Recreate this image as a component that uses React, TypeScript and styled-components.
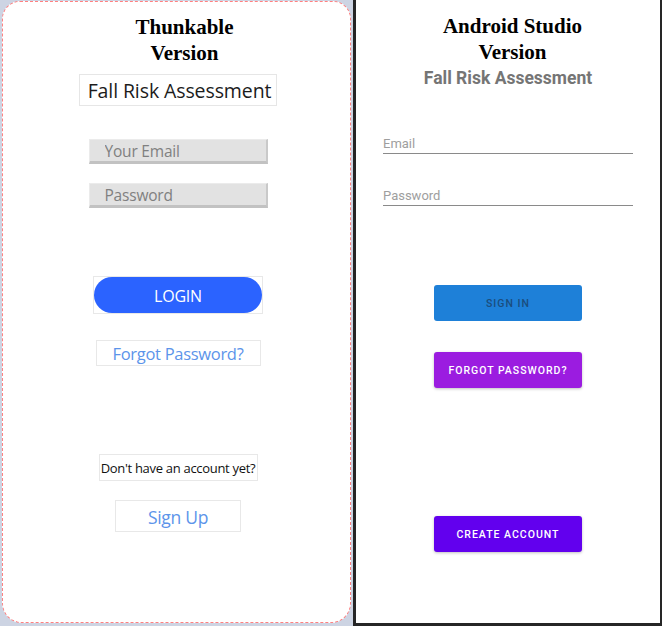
import React from "react";
import styled, { createGlobalStyle } from "styled-components";

const Global = createGlobalStyle`
  html, body { margin: 0; padding: 0; background: #ffffff; }
  #root { width: 662px; height: 626px; }
  * { box-sizing: border-box; }
`;

const Page = styled.div`
  display: flex;
  width: 662px;
  height: 626px;
  overflow: hidden;
`;

const LeftBackdrop = styled.div`
  width: 353px;
  height: 626px;
  background: #cdd4e3;
  padding: 1px 2px 3px 2px;
  display: flex;
`;

const PhoneCard = styled.div`
  flex: 1;
  background: #ffffff;
  border: 1px dashed #ff8080;
  border-radius: 18px 18px 20px 20px;
  display: flex;
  flex-direction: column;
  align-items: center;
  padding: 12px 0 0 3px;
`;

const RightPanel = styled.div`
  width: 309px;
  height: 626px;
  background: #ffffff;
  border-left: 3px solid #262626;
  border-right: 2px solid #262626;
  border-bottom: 3px solid #262626;
  display: flex;
  flex-direction: column;
  align-items: center;
  padding-top: 13px;
`;

const Title = styled.h1<{ $shift: number }>`
  margin: 0 0 0 ${(p) => p.$shift}px;
  font-family: "Liberation Serif", "Times New Roman", serif;
  font-weight: 700;
  font-size: 21px;
  line-height: 26px;
  color: #000000;
  text-align: center;
`;

/* ---------- Thunkable parts ---------- */

const Label = styled.div`
  margin-top: 8px;
  height: 32px;
  padding: 0 5px 0 8px;
  border: 1px solid #e6e6e6;
  display: flex;
  align-items: center;
  font-family: "Open Sans", "Noto Sans", sans-serif;
  font-size: 19.5px;
  letter-spacing: -0.1px;
  color: #1c1c1c;
`;

const TkInput = styled.input<{ $top: number }>`
  display: block;
  margin-top: ${(p) => p.$top}px;
  width: 179px;
  height: 25px;
  padding: 1px 0 0 15px;
  background: #e2e2e2;
  border-style: solid;
  border-width: 1px 2px 3px 1px;
  border-color: #ebebeb #c9c9c9 #c2c2c2 #ebebeb;
  outline: none;
  font-family: "Open Sans", "Noto Sans", sans-serif;
  font-size: 15.5px;
  letter-spacing: -0.2px;
  color: #808080;
  &::placeholder { color: #808080; opacity: 1; }
`;

const PillFrame = styled.div`
  margin-top: 68px;
  border: 1px solid #e8e8e8;
  width: 170px;
  height: 38px;
  display: flex;
`;

const PillButton = styled.button`
  flex: 1;
  border: none;
  border-radius: 19px;
  background: #2b63ff;
  color: #ffffff;
  font-family: "Open Sans", "Noto Sans", sans-serif;
  font-size: 16px;
  letter-spacing: -0.2px;
  padding: 1px 0 0 0;
`;

const LinkBox = styled.button<{ $top: number; $w: number; $h: number; $size: number }>`
  margin-top: ${(p) => p.$top}px;
  width: ${(p) => p.$w}px;
  height: ${(p) => p.$h}px;
  background: #ffffff;
  border: 1px solid #e8e8e8;
  color: #5c94ea;
  font-family: "Open Sans", "Noto Sans", sans-serif;
  font-size: ${(p) => p.$size}px;
  letter-spacing: -0.3px;
  padding: 1px 0 0 0;
`;

const Note = styled.div`
  margin-top: 88px;
  width: 159px;
  height: 27px;
  border: 1px solid #e8e8e8;
  display: flex;
  align-items: center;
  justify-content: center;
  font-family: "Open Sans", "Noto Sans", sans-serif;
  font-size: 13px;
  letter-spacing: -0.3px;
  color: #111111;
  white-space: nowrap;
`;

/* ---------- Android parts ---------- */

const AppName = styled.div`
  margin-top: 2px;
  font-family: Roboto, "Noto Sans", sans-serif;
  font-weight: 700;
  font-size: 17.5px;
  line-height: 22px;
  color: #757575;
`;

const Field = styled.div<{ $top: number }>`
  margin-top: ${(p) => p.$top}px;
  width: 250px;
  border-bottom: 1.5px solid #8a8a8a;
  padding-bottom: 1px;
  font-family: Roboto, "Noto Sans", sans-serif;
  font-size: 13px;
  line-height: 16px;
  color: #9e9e9e;
`;

const MatButton = styled.button<{ $bg: string; $fg: string; $top: number; $shadow?: boolean }>`
  margin-top: ${(p) => p.$top}px;
  width: 148px;
  height: 36px;
  border: none;
  border-radius: 3px;
  background: ${(p) => p.$bg};
  color: ${(p) => p.$fg};
  font-family: Roboto, "Noto Sans", sans-serif;
  font-weight: 500;
  font-size: 10.5px;
  letter-spacing: 1px;
  text-transform: uppercase;
  padding: 0;
  box-shadow: ${(p) => (p.$shadow ? "0 1px 3px rgba(0,0,0,0.25)" : "none")};
`;

export default function App() {
  return (
    <Page>
      <Global />
      <LeftBackdrop>
        <PhoneCard>
          <Title $shift={13}>
            Thunkable
            <br />
            Version
          </Title>
          <Label>Fall Risk Assessment</Label>
          <TkInput $top={33} placeholder="Your Email" />
          <TkInput $top={19} type="password" placeholder="Password" />
          <PillFrame>
            <PillButton>LOGIN</PillButton>
          </PillFrame>
          <LinkBox $top={26} $w={165} $h={26} $size={16.5}>
            Forgot Password?
          </LinkBox>
          <Note>Don't have an account yet?</Note>
          <LinkBox $top={19} $w={126} $h={32} $size={17.5}>
            Sign Up
          </LinkBox>
        </PhoneCard>
      </LeftBackdrop>
      <RightPanel>
        <Title $shift={9}>
          Android Studio
          <br />
          Version
        </Title>
        <AppName>Fall Risk Assessment</AppName>
        <Field $top={47}>Email</Field>
        <Field $top={34}>Password</Field>
        <MatButton $top={79} $bg="#1e80d8" $fg="#1b4d7d">
          Sign in
        </MatButton>
        <MatButton $top={31} $bg="#9b1ce0" $fg="#ffffff" $shadow>
          Forgot password?
        </MatButton>
        <MatButton $top={128} $bg="#6200ee" $fg="#ffffff" $shadow>
          Create account
        </MatButton>
      </RightPanel>
    </Page>
  );
}
